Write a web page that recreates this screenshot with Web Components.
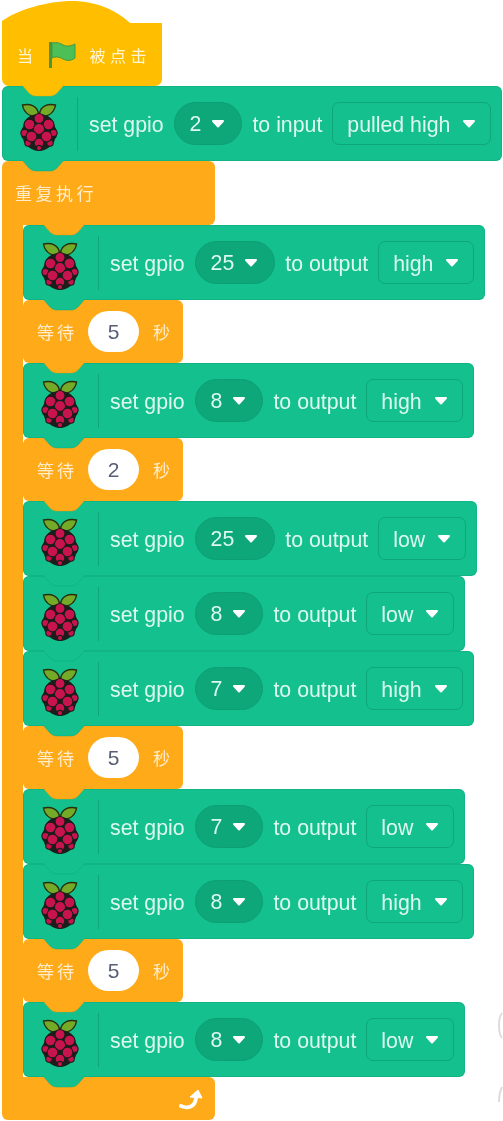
<!DOCTYPE html>
<html lang="zh">
<head>
<meta charset="utf-8">
<title>blocks</title>
<style>
  html, body { margin: 0; background: #fff; }
  body { padding: 1px 0 0 2px; height: 1120px; overflow: hidden; position: relative; font-family: "Liberation Sans", "Noto Sans CJK SC", sans-serif; filter: blur(.35px); }
  .stray { position: absolute; left: 497px; top: 1012px; }
</style>
</head>
<body>
<hat-block></hat-block>
<gpio-block gpio="2" mode="input" level="pulled high"></gpio-block>
<loop-block>
  <gpio-block gpio="25" mode="output" level="high"></gpio-block>
  <wait-block seconds="5"></wait-block>
  <gpio-block gpio="8" mode="output" level="high"></gpio-block>
  <wait-block seconds="2"></wait-block>
  <gpio-block gpio="25" mode="output" level="low"></gpio-block>
  <gpio-block gpio="8" mode="output" level="low"></gpio-block>
  <gpio-block gpio="7" mode="output" level="high"></gpio-block>
  <wait-block seconds="5"></wait-block>
  <gpio-block gpio="7" mode="output" level="low"></gpio-block>
  <gpio-block gpio="8" mode="output" level="high"></gpio-block>
  <wait-block seconds="5"></wait-block>
  <gpio-block gpio="8" mode="output" level="low"></gpio-block>
</loop-block>
<svg class="stray" width="6" height="92" viewBox="0 0 6 92" fill="none" stroke="#ddd" stroke-width="2"><path d="M5 1C1 6 1 21 5 26"/><path d="M5 75C3 79 2 84 2 90"/></svg>

<script>
// piezas compartidas
const tab = (fill, line, left) => `
  <svg class="tab" style="left:${left}px" width="42" height="12" viewBox="0 0 42 12">
    <path d="M0 0L7 8Q10 11 13 11H29Q32 11 35 8L42 0Z" fill="${fill}"/>
    <path d="M0 0L7 8Q10 11 13 11H29Q32 11 35 8L42 0" fill="none" stroke="${line}" stroke-opacity=".45"/>
  </svg>`;

const tabCss = `.tab { position: absolute; top: 100%; margin-top: -1px; z-index: 2; display: block; }`;

const arrow = `<svg width="14" height="8" viewBox="0 0 14 8"><path d="M2 1H12L7 6.500Z" fill="#fff" stroke="#fff" stroke-width="2" stroke-linejoin="round"/></svg>`;

const berries = [[4.5,30,3.6],[33.500,30,3.6],[8,40,3.2],[30,40,3.2],[19,15.500,5],[9.5,21.500,5.4],[28.5,21.500,5.4],[19,26,5.6],[11.5,33.5,5.4],[26.500,33.5,5.4],[19,40,4.8],[19,45,2.6]]
  .map(([x, y, r]) => `<circle cx="${x}" cy="${y}" r="${r}"/>`).join("");

const raspberry = `
  <svg width="38" height="48" viewBox="0 0 38 48">
    <path d="M17.500 14C13 14 4 12 2.500 2C9 0.500 19 2 18.500 13Z" fill="#75a928" stroke="#26300f" stroke-width="1.4"/>
    <path d="M20.500 14C25 14 34 12 35.500 2C29 0.500 19 2 19.500 13Z" fill="#75a928" stroke="#26300f" stroke-width="1.4"/>
    <path d="M19 11C28 11 34 16 35 24C38 28 38 33 35 36C34 42 26 48 19 48C12 48 4 42 3 36C0 33 0 28 3 24C4 16 10 11 19 11Z" fill="#1d1d1b"/>
    <g fill="#c7134e" stroke="#1d1d1b" stroke-width="1.1">${berries}</g>
  </svg>`;

// -------- bloque sombrero --------
class HatBlock extends HTMLElement {
  constructor() {
    super();
    this.attachShadow({ mode: "open" });
    this.shadowRoot.innerHTML = `
    <style>
      :host { display: block; width: 160px; position: relative; color: #fff; }
      .cap { display: block; }
      .body {
        height: 63px; background: #ffbf00; border-radius: 0 0 7px 7px;
        display: flex; align-items: center; padding: 0 0 0 15px; box-sizing: border-box;
        font-size: 16px; letter-spacing: 4.5px; color: #fff6d8;
      }
      .flag { margin: 0 14px 0 11px; display: block; flex: none; }
      ${tabCss}
    </style>
    <svg class="cap" width="160" height="22" viewBox="0 0 160 22">
      <path d="M0 22V20C15 9 45 0 70 0C95 0 115 10 128 22Z" fill="#ffbf00"/>
      <path d="M127 21V22H160V28H128ZM127 22H153Q160 22 160 29V22Z" fill="#ffbf00"/>
    </svg>
    <div class="body">
      <span>当</span>
      <svg class="flag" width="27" height="28" viewBox="0 0 27 28">
        <path d="M1.5 27V1" stroke="#45993d" stroke-width="3"/>
        <path d="M3 2C8 1 11 2 14 4C18 6 22 5 26 3V17C22 20 18 20 14 18C10 16 7 15 3 17Z" fill="#4cbf56" stroke="#45993d"/>
      </svg>
      <span>被点击</span>
    </div>
    ${tab("#ffbf00", "#e0a800", 20)}`;
  }
}

// -------- bloque gpio --------
class GpioBlock extends HTMLElement {
  connectedCallback() {
    if (this.shadowRoot) return;
    const gpio = this.getAttribute("gpio");
    const mode = this.getAttribute("mode");
    const level = this.getAttribute("level");
    this.attachShadow({ mode: "open" });
    this.shadowRoot.innerHTML = `
    <style>
      :host { display: block; width: fit-content; position: relative; }
      .row {
        height: 75px; box-sizing: border-box; background: #13c08e; border-radius: 6px;
        box-shadow: inset 0 0 0 1px rgba(14,160,118,.35);
        display: flex; align-items: center; gap: 10px; padding: 0 11px 0 18px;
        font-size: 21.3px; color: #dcf8ef; white-space: nowrap;
      }
      .icon { display: block; flex: none; margin-top: 13px; }
      .line { width: 1px; height: 54px; background: #0fa67b; margin: 0 1px 0 9px; flex: none; }
      .label { padding-top: 4px; }
      .pill, .menu {
        height: 43px; box-sizing: border-box; display: flex; align-items: center;
        background: #0ea77a;
      }
      .pill { border-radius: 22px; padding: 0 16px 0 15px; gap: 10px; border: 1px solid #0d9f74; }
      .pill span { padding-top: 2px; }
      .menu { background: #13c08e; border: 1.5px solid #0ea77a; border-radius: 7px; padding: 0 14px 0 14px; gap: 12px; }
      .menu span { padding-top: 4px; }
      svg { flex: none; }
      ${tabCss}
    </style>
    <div class="row">
      <span class="icon">${raspberry}</span>
      <span class="line"></span>
      <span class="label">set gpio</span>
      <span class="pill"><span>${gpio}</span>${arrow}</span>
      <span class="label">to ${mode}</span>
      <span class="menu"><span>${level}</span>${arrow}</span>
    </div>
    ${tab("#13c08e", "#0ea77a", 20)}`;
  }
}

// -------- bloque esperar --------
class WaitBlock extends HTMLElement {
  connectedCallback() {
    if (this.shadowRoot) return;
    const seconds = this.getAttribute("seconds");
    this.attachShadow({ mode: "open" });
    this.shadowRoot.innerHTML = `
    <style>
      :host { display: block; width: 160px; position: relative; }
      .row {
        height: 63px; box-sizing: border-box; background: #ffab19; border-radius: 6px;
        display: flex; align-items: center; padding: 0 0 0 14px;
        font-size: 17px; letter-spacing: 3px; color: #ffeccb;
      }
      .num {
        width: 51px; height: 41px; margin: 0 14px 0 11px; background: #fff; border-radius: 21px; flex: none;
        display: flex; align-items: center; justify-content: center;
        font-size: 21px; letter-spacing: 0; color: #575e75;
      }
      ${tabCss}
    </style>
    <div class="row"><span>等待</span><span class="num">${seconds}</span><span>秒</span></div>
    ${tab("#ffab19", "#e8950c", 20)}`;
  }
}

// -------- bloque repetir, con <slot> para su contenido --------
class LoopBlock extends HTMLElement {
  constructor() {
    super();
    this.attachShadow({ mode: "open" });
    this.shadowRoot.innerHTML = `
    <style>
      :host { display: block; position: relative; width: fit-content; }
      .head {
        width: 213px; height: 64px; box-sizing: border-box; background: #ffab19;
        border-radius: 6px 6px 6px 0; position: relative;
        display: flex; align-items: center; padding: 0 0 2px 13px;
        font-size: 17px; letter-spacing: 3.5px; color: #ffeccb;
      }
      .arm { border-left: 21px solid #ffab19; min-height: 20px; }
      .foot {
        width: 213px; height: 43px; box-sizing: border-box; background: #ffab19;
        border-radius: 0 6px 6px 6px; display: flex; align-items: center; justify-content: flex-end;
        padding: 0 11px 0 0;
      }
      ${tabCss}
    </style>
    <div class="head"><span>重复执行</span>${tab("#ffab19", "#e8950c", 41)}</div>
    <div class="arm"><slot></slot></div>
    <div class="foot">
      <svg width="25" height="24" viewBox="0 0 25 24">
        <path d="M2 19C9 22 16 20 17 11" fill="none" stroke="#fff" stroke-width="3.8" stroke-linecap="round"/>
        <path d="M11 10L19 3L23 11Z" fill="#fff" stroke="#fff" stroke-linejoin="round"/>
      </svg>
    </div>`;
  }
}

customElements.define("hat-block", HatBlock);
customElements.define("gpio-block", GpioBlock);
customElements.define("wait-block", WaitBlock);
customElements.define("loop-block", LoopBlock);
</script>
</body>
</html>
